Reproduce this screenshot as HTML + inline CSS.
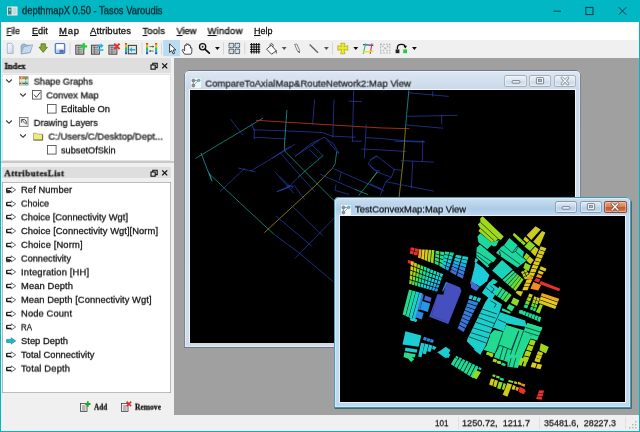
<!DOCTYPE html>
<html><head><meta charset="utf-8"><title>depthmapX</title><style>
html,body{margin:0;padding:0}
body{width:640px;height:432px;overflow:hidden;position:relative;background:#00b7c3;font-family:"Liberation Sans",sans-serif}
.a{position:absolute}
.t{position:absolute;white-space:nowrap;filter:blur(0.3px);-webkit-text-stroke:0.28px currentColor}
svg{position:absolute;overflow:visible}
u{text-decoration:underline;text-underline-offset:1px}
</style></head><body>
<div class="a" style="left:1px;top:22px;width:638px;height:18px;background:#ffffff;"></div>
<div class="a" style="left:1px;top:40px;width:638px;height:17.5px;background:#f0f0f0;"></div>
<div class="a" style="left:1px;top:57px;width:173px;height:358px;background:#f0f0f0;"></div>
<div class="a" style="left:174px;top:57.5px;width:465px;height:357.5px;background:#a0a0a0;"></div>
<div class="a" style="left:1px;top:415px;width:638px;height:16px;background:#f0f0f0;"></div>
<svg style="left:7px;top:6px" width="11" height="10" viewBox="0 0 11 10"><rect x="0" y="0.5" width="10.5" height="9" fill="#e8eef0"/><rect x="1" y="1.5" width="3.5" height="7" fill="#3f7f86"/><rect x="5.5" y="1.5" width="4" height="7" fill="#c9d6da"/><rect x="2" y="3" width="1.5" height="2" fill="#7fd0a0"/></svg>
<svg style="left:540px;top:0" width="100" height="22" viewBox="0 0 100 22"><g stroke="#063a40" stroke-width="1" fill="none"><path d="M13.5 11.2h7.5"/><rect x="45.8" y="7.4" width="7.2" height="7.2"/><path d="M78.8 7.3l7.4 7.4M86.2 7.3l-7.4 7.4"/></g></svg>
<div class="a" style="left:458px;top:417px;width:1px;height:12px;background:#e0e0e0;"></div>
<div class="a" style="left:538.5px;top:417px;width:1.0px;height:12px;background:#e0e0e0;"></div>
<div class="a" style="left:625px;top:417px;width:1px;height:12px;background:#e0e0e0;"></div>
<svg style="left:628px;top:420px" width="10" height="10"><g fill="#b8b8b8"><rect x="7" y="1" width="1.5" height="1.5"/><rect x="4" y="4" width="1.5" height="1.5"/><rect x="7" y="4" width="1.5" height="1.5"/><rect x="1" y="7" width="1.5" height="1.5"/><rect x="4" y="7" width="1.5" height="1.5"/><rect x="7" y="7" width="1.5" height="1.5"/></g></svg>
<div class="a" style="left:2px;top:58px;width:168.8px;height:14.599999999999994px;background:#dedede;"></div>
<div class="a" style="left:2px;top:74px;width:169px;height:87px;background:#ffffff;box-shadow:0 0 0 1px #e3e3e3 inset"></div>
<div class="a" style="left:1px;top:161px;width:173px;height:1.5px;background:#c8c8c8;"></div>
<div class="a" style="left:2px;top:167.2px;width:168.8px;height:11.300000000000011px;background:#dedede;"></div>
<div class="a" style="left:2px;top:181.8px;width:168.5px;height:211.7px;background:#ffffff;box-shadow:0 0 0 0.8px #a3a8ae inset"></div>
<svg style="left:148px;top:60.5px" width="24" height="10" viewBox="0 0 24 10"><g stroke="#111" fill="none" stroke-width="1.1"><rect x="3" y="4" width="4.2" height="4.2" fill="#dedede"/><path d="M4.8 4V2.2h4.4v4.4H7.4"/><path d="M14.2 2.4l5 5M19.2 2.4l-5 5" stroke-width="1.3"/></g></svg>
<svg style="left:148px;top:168px" width="24" height="10" viewBox="0 0 24 10"><g stroke="#111" fill="none" stroke-width="1.1"><rect x="3" y="4" width="4.2" height="4.2" fill="#dedede"/><path d="M4.8 4V2.2h4.4v4.4H7.4"/><path d="M14.2 2.4l5 5M19.2 2.4l-5 5" stroke-width="1.3"/></g></svg>
<svg style="left:4.6px;top:77.8px" width="8" height="6" viewBox="0 0 8 6"><path d="M1.2 1.5L4 4.3 6.800 1.5" stroke="#333" stroke-width="1.100" fill="none"/></svg>
<svg style="left:18.8px;top:91.6px" width="8" height="6" viewBox="0 0 8 6"><path d="M1.2 1.5L4 4.3 6.800 1.5" stroke="#333" stroke-width="1.100" fill="none"/></svg>
<svg style="left:4.6px;top:119.1px" width="8" height="6" viewBox="0 0 8 6"><path d="M1.2 1.5L4 4.3 6.800 1.5" stroke="#333" stroke-width="1.100" fill="none"/></svg>
<svg style="left:18.8px;top:132.8px" width="8" height="6" viewBox="0 0 8 6"><path d="M1.2 1.5L4 4.3 6.800 1.5" stroke="#333" stroke-width="1.100" fill="none"/></svg>
<svg style="left:32.2px;top:90.39999999999999px" width="9.600" height="9.600" viewBox="0 0 9.600 9.600"><rect x="0.500" y="0.500" width="8.600" height="8.600" fill="#fff" stroke="#555" stroke-width="0.9"/><path d="M2 4.700l2.300 2.600 4-5" stroke="#3a3a3a" stroke-width="1" fill="none"/></svg>
<svg style="left:46.8px;top:104.1px" width="9.600" height="9.600" viewBox="0 0 9.600 9.600"><rect x="0.500" y="0.500" width="8.600" height="8.600" fill="#fff" stroke="#555" stroke-width="0.9"/></svg>
<svg style="left:46.8px;top:145.4px" width="9.600" height="9.600" viewBox="0 0 9.600 9.600"><rect x="0.500" y="0.500" width="8.600" height="8.600" fill="#fff" stroke="#555" stroke-width="0.9"/></svg>
<svg style="left:18.700px;top:76.3px" width="9.400" height="9.400" viewBox="0 0 9.400 9.400"><rect x="0.300" y="0.300" width="8.800" height="8.800" fill="#dcdcdc" stroke="#8a8a8a" stroke-width="0.6"/><path d="M0.600 2h8.200" stroke="#e02828" stroke-width="1.300"/><path d="M0.600 7.400h8.200" stroke="#2858d0" stroke-width="1.300"/><path d="M2.800 0.800v7.800" stroke="#e8d820" stroke-width="1.200"/><path d="M6.600 0.800v7.800" stroke="#30c030" stroke-width="1.200"/><path d="M0.600 4.700h8.200" stroke="#f4f4f4" stroke-width="0.7"/></svg>
<svg style="left:18.700px;top:117.3px" width="9.400" height="9.800" viewBox="0 0 9.400 9.800"><rect x="0.400" y="0.400" width="8.600" height="9" fill="#f2f2f2" stroke="#6a6a6a" stroke-width="0.8"/><path d="M2.400 2.600h3.200l1.600 1.600v3" stroke="#333" stroke-width="0.9" fill="none"/><path d="M2.600 2.800l3.600 3.800M2.400 2.600v3.200" stroke="#444" stroke-width="0.8" fill="none"/></svg>
<svg style="left:33px;top:131.9px" width="10" height="8.600" viewBox="0 0 10 8.600"><path d="M0.500 1.200h3l0.800 1h5.200v5.800h-9z" fill="#ecec80" stroke="#8a8a48" stroke-width="0.6"/><path d="M0.600 8.100h9.100v-5.600" stroke="#55553a" stroke-width="0.8" fill="none"/></svg>
<svg style="left:5.600px;top:185.9px" width="10.400" height="8" viewBox="0 0 10.400 8"><path d="M0.600 2.400h4.600V0.800L9.700 3.900 5.200 7V5.400H0.600z" fill="#ffffff" stroke="#333" stroke-width="0.7" stroke-linejoin="round"/><path d="M0.600 5.500h4.600M0.700 2.400v3.100" stroke="#111" stroke-width="1.300" fill="none"/><path d="M0.600 2.400h4.600" stroke="#222" stroke-width="0.9" fill="none"/><rect x="0.3" y="4" width="3.6" height="3.2" fill="#333"/></svg>
<svg style="left:5.600px;top:199.65px" width="10.400" height="8" viewBox="0 0 10.400 8"><path d="M0.600 2.400h4.600V0.800L9.700 3.900 5.200 7V5.400H0.600z" fill="#ffffff" stroke="#333" stroke-width="0.7" stroke-linejoin="round"/><path d="M0.600 5.500h4.600M0.700 2.400v3.100" stroke="#111" stroke-width="1.300" fill="none"/><path d="M0.600 2.400h4.600" stroke="#222" stroke-width="0.9" fill="none"/></svg>
<svg style="left:5.600px;top:213.4px" width="10.400" height="8" viewBox="0 0 10.400 8"><path d="M0.600 2.400h4.600V0.800L9.700 3.900 5.200 7V5.400H0.600z" fill="#ffffff" stroke="#333" stroke-width="0.7" stroke-linejoin="round"/><path d="M0.600 5.500h4.600M0.700 2.400v3.100" stroke="#111" stroke-width="1.300" fill="none"/><path d="M0.600 2.400h4.600" stroke="#222" stroke-width="0.9" fill="none"/></svg>
<svg style="left:5.600px;top:227.15px" width="10.400" height="8" viewBox="0 0 10.400 8"><path d="M0.600 2.400h4.600V0.800L9.700 3.900 5.200 7V5.400H0.600z" fill="#ffffff" stroke="#333" stroke-width="0.7" stroke-linejoin="round"/><path d="M0.600 5.500h4.600M0.700 2.400v3.100" stroke="#111" stroke-width="1.300" fill="none"/><path d="M0.600 2.400h4.600" stroke="#222" stroke-width="0.9" fill="none"/></svg>
<svg style="left:5.600px;top:240.9px" width="10.400" height="8" viewBox="0 0 10.400 8"><path d="M0.600 2.400h4.600V0.800L9.700 3.900 5.200 7V5.400H0.600z" fill="#ffffff" stroke="#333" stroke-width="0.7" stroke-linejoin="round"/><path d="M0.600 5.500h4.600M0.700 2.400v3.100" stroke="#111" stroke-width="1.300" fill="none"/><path d="M0.600 2.400h4.600" stroke="#222" stroke-width="0.9" fill="none"/></svg>
<svg style="left:5.600px;top:254.65px" width="10.400" height="8" viewBox="0 0 10.400 8"><path d="M0.600 2.400h4.600V0.800L9.700 3.900 5.200 7V5.400H0.600z" fill="#ffffff" stroke="#333" stroke-width="0.7" stroke-linejoin="round"/><path d="M0.600 5.500h4.600M0.700 2.400v3.100" stroke="#111" stroke-width="1.300" fill="none"/><path d="M0.600 2.400h4.600" stroke="#222" stroke-width="0.9" fill="none"/><rect x="0.3" y="4" width="3.6" height="3.2" fill="#333"/></svg>
<svg style="left:5.600px;top:268.4px" width="10.400" height="8" viewBox="0 0 10.400 8"><path d="M0.600 2.400h4.600V0.800L9.700 3.900 5.200 7V5.400H0.600z" fill="#ffffff" stroke="#333" stroke-width="0.7" stroke-linejoin="round"/><path d="M0.600 5.500h4.600M0.700 2.400v3.100" stroke="#111" stroke-width="1.300" fill="none"/><path d="M0.600 2.400h4.600" stroke="#222" stroke-width="0.9" fill="none"/></svg>
<svg style="left:5.600px;top:282.15px" width="10.400" height="8" viewBox="0 0 10.400 8"><path d="M0.600 2.400h4.600V0.800L9.700 3.900 5.200 7V5.400H0.600z" fill="#ffffff" stroke="#333" stroke-width="0.7" stroke-linejoin="round"/><path d="M0.600 5.500h4.600M0.700 2.400v3.100" stroke="#111" stroke-width="1.300" fill="none"/><path d="M0.600 2.400h4.600" stroke="#222" stroke-width="0.9" fill="none"/></svg>
<svg style="left:5.600px;top:295.9px" width="10.400" height="8" viewBox="0 0 10.400 8"><path d="M0.600 2.400h4.600V0.800L9.700 3.900 5.200 7V5.400H0.600z" fill="#ffffff" stroke="#333" stroke-width="0.7" stroke-linejoin="round"/><path d="M0.600 5.500h4.600M0.700 2.400v3.100" stroke="#111" stroke-width="1.300" fill="none"/><path d="M0.600 2.400h4.600" stroke="#222" stroke-width="0.9" fill="none"/></svg>
<svg style="left:5.600px;top:309.65px" width="10.400" height="8" viewBox="0 0 10.400 8"><path d="M0.600 2.400h4.600V0.800L9.700 3.900 5.200 7V5.400H0.600z" fill="#ffffff" stroke="#333" stroke-width="0.7" stroke-linejoin="round"/><path d="M0.600 5.500h4.600M0.700 2.400v3.100" stroke="#111" stroke-width="1.300" fill="none"/><path d="M0.600 2.400h4.600" stroke="#222" stroke-width="0.9" fill="none"/></svg>
<svg style="left:5.600px;top:323.4px" width="10.400" height="8" viewBox="0 0 10.400 8"><path d="M0.600 2.400h4.600V0.800L9.700 3.900 5.200 7V5.400H0.600z" fill="#ffffff" stroke="#333" stroke-width="0.7" stroke-linejoin="round"/><path d="M0.600 5.500h4.600M0.700 2.400v3.100" stroke="#111" stroke-width="1.300" fill="none"/><path d="M0.600 2.400h4.600" stroke="#222" stroke-width="0.9" fill="none"/></svg>
<svg style="left:5.600px;top:337.15px" width="10.400" height="8" viewBox="0 0 10.400 8"><path d="M0.600 2.400h4.600V0.800L9.700 3.900 5.200 7V5.400H0.600z" fill="#22b8c8" stroke="#1a8a98" stroke-width="0.7" stroke-linejoin="round"/></svg>
<svg style="left:5.600px;top:350.9px" width="10.400" height="8" viewBox="0 0 10.400 8"><path d="M0.600 2.400h4.600V0.800L9.700 3.900 5.200 7V5.400H0.600z" fill="#ffffff" stroke="#333" stroke-width="0.7" stroke-linejoin="round"/><path d="M0.600 5.500h4.600M0.700 2.400v3.100" stroke="#111" stroke-width="1.300" fill="none"/><path d="M0.600 2.400h4.600" stroke="#222" stroke-width="0.9" fill="none"/></svg>
<svg style="left:5.600px;top:364.65px" width="10.400" height="8" viewBox="0 0 10.400 8"><path d="M0.600 2.400h4.600V0.800L9.700 3.900 5.200 7V5.400H0.600z" fill="#ffffff" stroke="#333" stroke-width="0.7" stroke-linejoin="round"/><path d="M0.600 5.500h4.600M0.700 2.400v3.100" stroke="#111" stroke-width="1.300" fill="none"/><path d="M0.600 2.400h4.600" stroke="#222" stroke-width="0.9" fill="none"/></svg>
<svg style="left:80px;top:401.2px" width="11" height="11" viewBox="0 0 11 11"><rect x="0.5" y="2.5" width="6.5" height="8" fill="#eee" stroke="#444" stroke-width="0.8"/><path d="M2 5h3.5M2 7h3.5M2 9h3.5" stroke="#555" stroke-width="0.7"/><path d="M7.8 0.3v5.4M5.1 3h5.4" stroke="#1aa82a" stroke-width="1.8"/></svg>
<svg style="left:121px;top:401.2px" width="11" height="11" viewBox="0 0 11 11"><rect x="0.5" y="2.5" width="6.5" height="8" fill="#eee" stroke="#444" stroke-width="0.8"/><path d="M2 5h3.5M2 7h3.5M2 9h3.5" stroke="#555" stroke-width="0.7"/><path d="M5.6 0.6l4.6 4.6M10.2 0.6L5.6 5.2" stroke="#e02a2a" stroke-width="1.6"/></svg>
<svg style="left:0;top:0" width="640" height="60" viewBox="0 0 640 60"><g filter="url(#tbb)"><defs><linearGradient id="rb" x1="0" y1="0" x2="0" y2="1"><stop offset="0" stop-color="#e02020"/><stop offset=".25" stop-color="#e8d020"/><stop offset=".5" stop-color="#30c040"/><stop offset=".75" stop-color="#20b0d8"/><stop offset="1" stop-color="#2030c0"/></linearGradient><linearGradient id="pg" x1="0" y1="0" x2="1" y2="1"><stop offset="0" stop-color="#ffffff"/><stop offset="1" stop-color="#c4d6ea"/></linearGradient></defs><path d="M70 42.5v12" stroke="#cfcfcf" stroke-width="0.8"/><path d="M142 42.5v12" stroke="#cfcfcf" stroke-width="0.8"/><path d="M161.5 42.5v12" stroke="#cfcfcf" stroke-width="0.8"/><path d="M223.5 42.5v12" stroke="#cfcfcf" stroke-width="0.8"/><path d="M244.8 42.5v12" stroke="#cfcfcf" stroke-width="0.8"/><path d="M332.5 42.5v12" stroke="#cfcfcf" stroke-width="0.8"/><path d="M7.3 43.3h4l1.8 1.8v8.3h-5.8z" fill="url(#pg)" stroke="#8ea2ba" stroke-width="0.7"/><path d="M21 46.2l1-2 3.2-.2.8 1.2h5.6l-1.4 7.4-9 1.4z" fill="#9fb9d6" stroke="#6f8cab" stroke-width="0.6"/><path d="M21.2 53.8l2.4-6.8 9.2-2.2-2.6 7.6z" fill="#c7d9ec" stroke="#7f9dbd" stroke-width="0.6"/><path d="M41 43.8h4.4v3.4h2l-4.2 5.2-4.2-5.2h2z" fill="#84a830" stroke="#5a7418" stroke-width="0.8" stroke-linejoin="round"/><rect x="55.300" y="43.500" width="9.400" height="9.800" rx="1" fill="#dfe8f4" stroke="#4a78c2" stroke-width="1.200"/><rect x="56.800" y="44.300" width="6.400" height="4" fill="#ffffff"/><rect x="59.400" y="49.800" width="4.400" height="3" fill="#4f6fa8"/><rect x="56.400" y="49.800" width="2.600" height="3" fill="#b4c6e0"/><rect x="75.8" y="45.2" width="8" height="9" fill="#c4c4c4" stroke="#3a3a3a" stroke-width="0.9"/><path d="M77.0 47.6h5.4M77.0 49.8h5.4M77.0 52h5.4M78.8 45.4v8.6" stroke="#555" stroke-width="0.6"/><path d="M83.8 43v6.6M80.5 46.3h6.6" stroke="#1fd040" stroke-width="2.2"/><rect x="91.4" y="45.2" width="8" height="9" fill="#c4c4c4" stroke="#3a3a3a" stroke-width="0.9"/><path d="M92.60000000000001 47.6h5.4M92.60000000000001 49.8h5.4M92.60000000000001 52h5.4M94.4 45.4v8.6" stroke="#555" stroke-width="0.6"/><path d="M97.2 44.8h3.4v-1.6l3 2.6-3 2.6v-1.6h-3.4z" fill="#22b2dc"/><path d="M103.4 49.2h-3.2v-1.3l-2.6 2.1 2.6 2.1v-1.3h3.2z" fill="#22b2dc"/><rect x="108.9" y="45.2" width="8" height="9" fill="#c4c4c4" stroke="#3a3a3a" stroke-width="0.9"/><path d="M110.10000000000001 47.6h5.4M110.10000000000001 49.8h5.4M110.10000000000001 52h5.4M111.9 45.4v8.6" stroke="#555" stroke-width="0.6"/><path d="M114.2 43.6l5.4 5.4M119.6 43.6l-5.4 5.4" stroke="#e43030" stroke-width="1.9"/><rect x="125" y="43" width="2" height="11.2" fill="url(#rb)"/><rect x="128.3" y="45.4" width="8.2" height="8.4" fill="#dfe6ec" stroke="#444" stroke-width="1.1"/><path d="M135.4 49h-3.4v-1.7l-3 2.4 3 2.4v-1.7h3.4z" fill="#22b2dc"/><rect x="146" y="43" width="2.1" height="11.2" fill="url(#rb)"/><rect x="155.1" y="43" width="2.1" height="11.2" fill="url(#rb)"/><path d="M149.4 46.6h4.4M149.4 51h4.4" stroke="#666" stroke-width="0.9"/><path d="M152.6 45.3l1.6 1.3-1.6 1.3zM150.6 49.7l-1.6 1.3 1.6 1.3z" fill="#555"/><rect x="163.2" y="40" width="16.8" height="16.2" fill="#b9dcf2"/><path d="M169.6 43.8v8.6l2-1.8 1.5 3.3 1.5-.7-1.5-3.2h2.7z" fill="#fff" stroke="#111" stroke-width="0.8" stroke-linejoin="round"/><path d="M184.6 54.2l-2.2-3.4c-.6-1 .5-1.8 1.3-1l.9 1v-5c0-1 1.4-1 1.5 0v-1.400c0-1 1.500-1 1.500 0v.5c0-1 1.500-1 1.500 0v1c.1-.9 1.400-.9 1.400.1v2.200c.1-.8 1.300-.8 1.300.2v3.300c0 1.300-.5 1.800-.9 2.500z" fill="#fff" stroke="#111" stroke-width="0.75" stroke-linejoin="round"/><circle cx="202.6" cy="46.8" r="3.1" fill="#eef3f8" stroke="#111" stroke-width="1.3"/><circle cx="202.6" cy="46.8" r="1" fill="#222"/><path d="M204.9 49.2l4.4 4" stroke="#111" stroke-width="1.7" stroke-linecap="round"/><path d="M215.0 47h4.800l-2.400 3z" fill="#111"/><rect x="229" y="43.3" width="4.600" height="4.400" fill="#c9e2f2" stroke="#333" stroke-width="0.9" stroke-dasharray="1.6 0.6"/><rect x="235" y="43.3" width="4.600" height="4.400" fill="#c9e2f2" stroke="#333" stroke-width="0.9" stroke-dasharray="1.6 0.6"/><rect x="229" y="49.2" width="4.600" height="4.400" fill="#c9e2f2" stroke="#333" stroke-width="0.9" stroke-dasharray="1.6 0.6"/><rect x="235" y="49.2" width="4.600" height="4.400" fill="#c9e2f2" stroke="#333" stroke-width="0.9" stroke-dasharray="1.6 0.6"/><path d="M250 44.6h10.200M250 47h10.200M250 49.400h10.200M250 51.800h10.200M251.600 43v10.600M254 43v10.600M256.400 43v10.600M258.800 43v10.600" stroke="#111" stroke-width="1"/><path d="M266.600 49.200l4.600-4 5 5.600-4.600 3.400z" fill="#fff" stroke="#333" stroke-width="0.9" stroke-linejoin="round"/><path d="M270.200 46.200c-.8-3.800 3.400-3.600 3 .4" fill="none" stroke="#333" stroke-width="0.8"/><path d="M275.800 49.800c1.400 1.200 1.200 3 .6 4.200-.8-1.200-1.200-2.600-.6-4.200z" fill="#555"/><path d="M281.8 47h4.800l-2.400 3z" fill="#555"/><path d="M294.600 44.400l2.200-.4 2.800 6.400-.2 2.200-1.800-1.200z" fill="#f4f4f4" stroke="#666" stroke-width="0.8" stroke-linejoin="round"/><path d="M298.200 51.200l1.200 1.400" stroke="#333" stroke-width="0.8"/><path d="M309.600 44.400l8.400 8.400" stroke="#666" stroke-width="1.400"/><path d="M324.0 47h4.800l-2.400 3z" fill="#555"/><path d="M340.600 43.200h4.400l-1 3.400 3.800-1v4.800l-3.800-1 1 4.400h-4.400l1-4.400-3.800 1v-4.800l3.800 1z" fill="#ecec24" stroke="#a8a820" stroke-width="0.7" stroke-linejoin="round"/><path d="M353.40000000000003 47h4.800l-2.400 3z" fill="#111"/><path d="M363 44.600l10.400.8" stroke="#2848d0" stroke-width="1.1"/><path d="M365.800 43.400l-2.600 10.400" stroke="#30c840" stroke-width="1.1"/><path d="M372 43.400l-1.800 10.400" stroke="#e03020" stroke-width="1.1"/><path d="M363 52.200l10.400-1" stroke="#e8e020" stroke-width="1.200"/><g stroke="#b4b4b4" stroke-width="1.100" stroke-dasharray="2 1"><path d="M380 44.200h10.400M380 53h10.400M380.600 43.400v10.400M389.800 43.400v10.400"/><path d="M382 45.600l6.400 6.200M388.400 45.600l-6.400 6.200"/></g><rect x="395.600" y="49.400" width="3.800" height="3.800" fill="#222"/><rect x="403.200" y="49.400" width="3.800" height="3.800" fill="#20d040"/><path d="M397.400 49v-1.400c0-4 7.600-4.200 7.800-.4" fill="none" stroke="#111" stroke-width="1.300"/><path d="M403.600 46l1.800 2.600 1.600-2.800z" fill="#111"/><path d="M412.0 47h4.800l-2.400 3z" fill="#111"/></g><defs><filter id="tbb"><feGaussianBlur stdDeviation="0.3"/></filter></defs></svg>
<div class="a" style="left:184.3px;top:70.4px;width:396.59999999999997px;height:277.79999999999995px;background:linear-gradient(180deg,#e0e9f4 0px,#d3e0ee 9px,#ccd9e9 19px,#d0dcea 100%);border-radius:5px 5px 0.5px 0.5px;box-shadow:0 0 0 0.9px #6f7a86 inset, 0 0 0 1.7px rgba(255,255,255,.55) inset"></div>
<div class="a" style="left:189.3px;top:88.89999999999999px;width:386.29999999999995px;height:254.40000000000003px;background:#f2f6fb"></div>
<div class="a" style="left:190.0px;top:89.6px;width:384.9px;height:253.00000000000003px;background:#000;overflow:hidden"><svg style="left:0;top:0" width="385" height="253" viewBox="0 0 385 253"><g opacity="0.95" filter="url(#axb)"><path d="M5.5 68.4 L73.2 28.0" stroke="#18a890" stroke-width="0.75" fill="none"/><path d="M40.6 29.1 L52.8 45.3" stroke="#2a40b0" stroke-width="0.75" fill="none"/><path d="M66.1 30.3 L100.0 32.4 L190.0 37.9 L219.4 38.7" stroke="#c03418" stroke-width="0.9" fill="none"/><path d="M61.1 33.2 L64.6 41.0" stroke="#2a40b0" stroke-width="0.75" fill="none"/><path d="M63.8 39.8 L100.0 41.0 L132.5 42.6 L142.0 46.1 L165.6 47.3" stroke="#2a40b0" stroke-width="0.75" fill="none"/><path d="M63.8 47.3 L96.0 48.9" stroke="#2a40b0" stroke-width="0.75" fill="none"/><path d="M64.2 39.0 L64.2 49.2" stroke="#2a40b0" stroke-width="0.75" fill="none"/><path d="M96.9 20.1 L94.5 53.9 L94.7 61.0" stroke="#20b0b8" stroke-width="0.75" fill="none"/><path d="M81.9 68.4 L100.0 56.3" stroke="#2a40b0" stroke-width="0.75" fill="none"/><path d="M11.0 63.0 L21.3 89.8" stroke="#20b0b8" stroke-width="0.75" fill="none"/><path d="M19.3 82.9 L22.0 91.4" stroke="#20b0b8" stroke-width="0.75" fill="none"/><path d="M19.7 84.3 L55.9 118.4 L83.9 144.2" stroke="#18a890" stroke-width="0.75" fill="none"/><path d="M83.9 144.2 L109.8 163.4 L143.5 191.9" stroke="#2a40b0" stroke-width="0.75" fill="none"/><path d="M29.9 101.6 L55.1 78.0" stroke="#2a40b0" stroke-width="0.75" fill="none"/><path d="M48.0 78.0 L65.4 81.9" stroke="#2a40b0" stroke-width="0.75" fill="none"/><path d="M60.6 81.1 L100.0 57.5 L105.0 53.9" stroke="#2a40b0" stroke-width="0.75" fill="none"/><path d="M89.8 62.2 L100.0 74.0 L124.6 101.6" stroke="#2a40b0" stroke-width="0.75" fill="none"/><path d="M85.0 81.9 L100.0 99.2 L104.0 103.4" stroke="#2a40b0" stroke-width="0.75" fill="none"/><path d="M86.6 101.6 L100.0 96.1" stroke="#2a40b0" stroke-width="0.75" fill="none"/><path d="M124.6 9.5 L122.6 34.7" stroke="#2a40b0" stroke-width="0.75" fill="none"/><path d="M144.0 9.5 L142.8 47.6" stroke="#2a40b0" stroke-width="0.75" fill="none"/><path d="M163.7 0.4 L162.4 51.6" stroke="#2a40b0" stroke-width="0.75" fill="none"/><path d="M158.5 11.1 L171.9 11.7" stroke="#2a40b0" stroke-width="0.75" fill="none"/><path d="M176.3 34.3 L174.3 68.4" stroke="#2a40b0" stroke-width="0.75" fill="none"/><path d="M161.7 51.1 L171.9 51.1" stroke="#2a40b0" stroke-width="0.75" fill="none"/><path d="M175.0 47.6 L190.0 48.4 L215.4 50.8 L234.3 51.6" stroke="#2a40b0" stroke-width="0.75" fill="none"/><path d="M171.1 59.0 L190.0 59.9 L216.2 61.5" stroke="#2a40b0" stroke-width="0.75" fill="none"/><path d="M120.7 53.9 L134.1 47.3 L143.5 53.9 L149.0 63.4 L146.7 61.4" stroke="#2a40b0" stroke-width="0.75" fill="none"/><path d="M105.0 66.5 L120.7 53.9" stroke="#2a40b0" stroke-width="0.75" fill="none"/><path d="M119.1 59.4 L128.6 68.4" stroke="#2a40b0" stroke-width="0.75" fill="none"/><path d="M121.5 54.7 L133.3 65.8" stroke="#2a40b0" stroke-width="0.75" fill="none"/><path d="M94.7 61.0 L143.5 110.2 L145.0 111.4" stroke="#18a890" stroke-width="0.75" fill="none"/><path d="M133.3 65.4 L116.8 79.5 L108.0 87.4" stroke="#18a890" stroke-width="0.75" fill="none"/><path d="M108.0 87.4 L99.4 96.1 L90.0 100.9" stroke="#2a40b0" stroke-width="0.75" fill="none"/><path d="M142.0 78.7 L125.6 95.4 L74.4 142.6" stroke="#b0a820" stroke-width="0.75" fill="none"/><path d="M146.7 61.4 L145.1 74.0 L142.0 78.7" stroke="#18a890" stroke-width="0.75" fill="none"/><path d="M137.2 50.4 L146.7 61.4" stroke="#2a40b0" stroke-width="0.75" fill="none"/><path d="M105.0 66.1 L129.4 50.4" stroke="#2a40b0" stroke-width="0.75" fill="none"/><path d="M143.5 78.7 L190.0 99.2 L194.0 100.9" stroke="#2a40b0" stroke-width="0.75" fill="none"/><path d="M130.2 84.3 L165.0 99.4" stroke="#2a40b0" stroke-width="0.75" fill="none"/><path d="M165.0 99.4 L178.2 104.7" stroke="#18a890" stroke-width="0.75" fill="none"/><path d="M151.4 81.9 L149.0 90.6" stroke="#2a40b0" stroke-width="0.75" fill="none"/><path d="M146.0 94.4 L145.0 100.4 L159.0 104.4" stroke="#2a40b0" stroke-width="0.75" fill="none"/><path d="M187.6 81.9 L168.7 105.5" stroke="#18a890" stroke-width="0.75" fill="none"/><path d="M187.6 66.1 L181.3 69.3 L178.2 74.0 L184.5 80.4 L190.0 81.1" stroke="#2a40b0" stroke-width="0.75" fill="none"/><path d="M90.0 86.6 L99.4 96.1" stroke="#2a40b0" stroke-width="0.75" fill="none"/><path d="M97.0 95.4 L103.4 96.1 L101.0 99.4" stroke="#2a40b0" stroke-width="0.75" fill="none"/><path d="M86.2 126.1 L121.7 156.0" stroke="#2a40b0" stroke-width="0.75" fill="none"/><path d="M101.2 115.1 L132.7 145.8" stroke="#2a40b0" stroke-width="0.75" fill="none"/><path d="M144.5 127.7 L104.8 168.6" stroke="#2a40b0" stroke-width="0.75" fill="none"/><path d="M104.3 95.4 L114.6 109.6" stroke="#2a40b0" stroke-width="0.75" fill="none"/><path d="M87.0 101.7 L102.0 96.2" stroke="#2a40b0" stroke-width="0.75" fill="none"/><path d="M218.9 0.4 L217.0 20.4" stroke="#20b0b8" stroke-width="0.75" fill="none"/><path d="M217.0 20.4 L215.4 39.0" stroke="#18a890" stroke-width="0.75" fill="none"/><path d="M215.4 39.0 L213.4 68.4 L209.1 107.1" stroke="#b0a820" stroke-width="0.75" fill="none"/><path d="M218.6 2.8 L258.7 6.4" stroke="#2a40b0" stroke-width="0.75" fill="none"/><path d="M242.7 1.2 L242.7 6.7" stroke="#2a40b0" stroke-width="0.75" fill="none"/><path d="M215.9 26.4 L267.4 25.3" stroke="#2a40b0" stroke-width="0.75" fill="none"/><path d="M251.7 24.8 L251.7 34.3" stroke="#2a40b0" stroke-width="0.75" fill="none"/><path d="M215.9 35.0 L253.2 38.2" stroke="#2a40b0" stroke-width="0.75" fill="none"/><path d="M232.8 50.0 L232.3 71.7" stroke="#2a40b0" stroke-width="0.75" fill="none"/><path d="M204.4 51.2 L235.1 52.0" stroke="#2a40b0" stroke-width="0.75" fill="none"/><path d="M210.7 70.6 L243.8 72.1" stroke="#2a40b0" stroke-width="0.75" fill="none"/><path d="M222.8 70.9 L221.3 98.4" stroke="#2a40b0" stroke-width="0.75" fill="none"/><path d="M195.7 91.7 L243.8 101.1" stroke="#2a40b0" stroke-width="0.75" fill="none"/><path d="M180.0 70.1 L186.3 65.8 L204.4 79.5 L201.3 87.4 L187.1 81.9 L180.0 74.8" stroke="#2a40b0" stroke-width="0.75" fill="none"/><path d="M187.1 81.9 L180.0 91.4" stroke="#20b060" stroke-width="0.75" fill="none"/><path d="M201.3 87.4 L195.7 91.7 L190.2 105.5" stroke="#2a40b0" stroke-width="0.75" fill="none"/><path d="M180.0 93.7 L191.8 99.2" stroke="#2a40b0" stroke-width="0.75" fill="none"/><path d="M203.6 79.5 L211.5 80.4" stroke="#2a40b0" stroke-width="0.75" fill="none"/></g><defs><filter id="axb" x="-2%" y="-2%" width="104%" height="104%"><feGaussianBlur stdDeviation="0.3"/></filter></defs></svg></div>
<svg style="left:191.2px;top:78.4px" width="10" height="10" viewBox="0 0 10 10"><rect x="0" y="0" width="10" height="10" rx="1" fill="#f6f8fa" opacity=".92"/><path d="M2.300 2.400h5.400M2.300 2.400v5.200M2.500 7.400l5-5" stroke="#7a8894" stroke-width="0.8" fill="none"/><circle cx="2.400" cy="2.400" r="1.500" fill="#8a9298" stroke="#5a646c" stroke-width="0.5"/><circle cx="7.800" cy="2.300" r="1.300" fill="#58c0d8" stroke="#4a8a9a" stroke-width="0.5"/><circle cx="2.400" cy="7.600" r="1.500" fill="#8a9298" stroke="#5a646c" stroke-width="0.5"/></svg>
<div class="a" style="left:553.8px;top:74.7px;width:22.3px;height:12.3px;background:linear-gradient(180deg,rgba(255,255,255,.55) 0,rgba(255,255,255,.25) 45%,rgba(200,215,232,.35) 55%,rgba(255,255,255,.3) 100%);border-radius:2.5px;box-shadow:0 0 0 0.9px #a3aebb inset,0 0 0 1.7px rgba(255,255,255,.5) inset"></div>
<svg style="left:559.95px;top:75.85000000000001px" width="10" height="10"><path d="M2 1.8l6 6.2M8 1.8l-6 6.2" stroke="#6d7882" stroke-width="2.6" stroke-linecap="round"/><path d="M2 1.8l6 6.2M8 1.8l-6 6.2" stroke="#f4f6f8" stroke-width="1.4" stroke-linecap="round"/></svg>
<div class="a" style="left:529.1px;top:74.7px;width:22.3px;height:12.3px;background:linear-gradient(180deg,rgba(255,255,255,.55) 0,rgba(255,255,255,.25) 45%,rgba(200,215,232,.35) 55%,rgba(255,255,255,.3) 100%);border-radius:2.5px;box-shadow:0 0 0 0.9px #a3aebb inset,0 0 0 1.7px rgba(255,255,255,.5) inset"></div>
<svg style="left:535.25px;top:75.85000000000001px" width="10" height="10"><rect x="1.4" y="1.6" width="7.2" height="6.2" rx="0.8" fill="#f4f6f8" stroke="#5d6873" stroke-width="0.8"/><rect x="3.4" y="3.6" width="3.2" height="2.2" fill="#a9b9c9" stroke="#5d6873" stroke-width="0.6"/></svg>
<div class="a" style="left:504.4px;top:74.7px;width:22.3px;height:12.3px;background:linear-gradient(180deg,rgba(255,255,255,.55) 0,rgba(255,255,255,.25) 45%,rgba(200,215,232,.35) 55%,rgba(255,255,255,.3) 100%);border-radius:2.5px;box-shadow:0 0 0 0.9px #a3aebb inset,0 0 0 1.7px rgba(255,255,255,.5) inset"></div>
<svg style="left:510.55000000000007px;top:75.85000000000001px" width="10" height="10"><rect x="1.2" y="4.6" width="7.6" height="2.6" rx="0.8" fill="#f4f6f8" stroke="#5d6873" stroke-width="0.8"/></svg>
<div class="a" style="left:333.9px;top:196.7px;width:297.30000000000007px;height:211.7px;background:linear-gradient(180deg,#cfe2f3 0px,#b6d2eb 8px,#accbe8 12px,#bed8ef 19px,#c0d9ef 100%);border-radius:5px 5px 0.5px 0.5px;box-shadow:0 0 0 0.9px #3a9aa6 inset, 0 0 0 1.7px rgba(255,255,255,.55) inset,0.7px 0.7px 0 0 #1d5a62"></div>
<div class="a" style="left:339.1px;top:215.20000000000002px;width:286.99999999999994px;height:187.89999999999998px;background:#e6f0fa"></div>
<div class="a" style="left:339.8px;top:215.9px;width:285.59999999999997px;height:186.49999999999997px;background:#000;overflow:hidden"><svg style="left:0;top:0" width="286" height="187" viewBox="0 0 286 187"><g filter="url(#cvb)"><polygon points="142.6,0.2 163.7,20.6 160.9,23.9 158.1,22.7 156.2,24.8 151.5,26.2 138.4,15.0 140.3,12.2 137.9,8.4 140.3,6.1 140.3,2.3" fill="#a0d81c"/><path d="M140.3 6.1 L158.1 22.7" stroke="#001018" stroke-width="0.65" fill="none"/><path d="M140.3 12.2 L154.3 24.8" stroke="#001018" stroke-width="0.65" fill="none"/><polygon points="140.3,17.3 151.5,26.2 159.0,23.9 156.2,30.0 153.4,30.4 151.5,29.0 147.3,33.3 138.4,26.2 137.4,20.6" fill="#1fd89e"/><polygon points="136.7,31.8 140.0,28.6 156.4,42.2 153.6,45.9 150.3,46.8 147.0,51.1 136.3,41.2" fill="#1fd89e"/><path d="M137.2 36.1 L152.7 46.4" stroke="#001018" stroke-width="0.65" fill="none"/><path d="M136.7 39.3 L148.9 48.7" stroke="#001018" stroke-width="0.65" fill="none"/><polygon points="135.3,42.2 138.3,43.8 136.4,46.8 134.4,45.9" fill="#1ececd"/><polygon points="135.3,45.9 143.3,52.0 149.4,59.0 147.0,65.6 141.9,68.1 131.1,68.1 131.1,64.7 134.4,51.5" fill="#1eccd8"/><polygon points="146.1,48.3 149.4,50.4 147.5,51.7" fill="#1eccd8"/><polygon points="130.4,64.8 134.4,68.1 130.2,68.1" fill="#4668d0"/><polygon points="153.1,62.8 157.8,65.6 155.0,68.1 148.9,68.1 149.4,66.5" fill="#1ed3b8"/><polygon points="169.4,21.9 177.9,29.4 176.4,31.3 178.3,30.7 184.1,36.0 182.5,41.2 186.3,44.7 177.4,51.5 155.8,37.2 157.2,35.5 161.4,30.8 163.8,29.4" fill="#1fd89e"/><path d="M163.8 29.4 L172.2 36.7 L177.9 29.4" stroke="#001018" stroke-width="0.65" fill="none"/><path d="M159.6 33.5 L180.2 48.5" stroke="#001018" stroke-width="0.65" fill="none"/><path d="M172.2 36.7 L175.5 35.5 L182.5 41.6" stroke="#001018" stroke-width="0.65" fill="none"/><path d="M175.5 35.5 L178.3 30.7" stroke="#001018" stroke-width="0.65" fill="none"/><path d="M155.8 37.2 L160.5 40.2 L159.6 35.5" stroke="#000" stroke-width="0.8" fill="none"/><polygon points="174.1,16.8 182.5,24.3 180.2,26.2 172.7,19.1" fill="#91d924"/><polygon points="189.6,24.8 195.2,29.4 190.0,35.1 184.4,30.4" fill="#8ada28"/><polygon points="195.2,30.4 198.5,33.2 195.2,40.2 190.5,35.5" fill="#cdcc1e"/><polygon points="186.3,36.9 189.6,39.8 186.3,44.0 183.5,41.2" fill="#8ada28"/><polygon points="189.6,40.2 193.8,44.0 190.5,48.2 186.3,44.4" fill="#cdcc1e"/><polygon points="195.5,10.3 200.7,13.6 191.3,23.9 186.6,19.2" fill="#cdcc1e"/><polygon points="202.1,15.0 205.4,16.4 199.3,30.4 193.2,25.8" fill="#cdcc1e"/><polygon points="185.2,20.6 189.4,24.3 187.1,26.7 183.3,23.4" fill="#cdcc1e"/><polygon points="182.4,24.3 185.7,27.2 183.8,29.5 180.5,26.2" fill="#91d924"/><polygon points="200.7,30.3 206.4,32.3 205.0,35.3 199.4,33.5" fill="#d6cb1f"/><polygon points="199.2,34.0 204.8,35.8 203.4,38.9 197.8,37.2" fill="#d7ca1f"/><polygon points="197.6,37.7 203.2,39.4 201.8,42.4 196.3,40.9" fill="#d9ca1f"/><polygon points="196.0,41.4 201.6,42.9 200.2,45.9 194.7,44.6" fill="#daca1f"/><polygon points="194.5,45.1 200.0,46.4 198.6,49.5 193.1,48.3" fill="#dcca1f"/><polygon points="192.9,48.8 198.4,50.0 197.1,53.0 191.6,52.0" fill="#deca1f"/><polygon points="191.3,52.5 196.8,53.5 195.5,56.5 190.0,55.7" fill="#dfc91f"/><polygon points="189.8,56.2 195.2,57.0 193.9,60.0 188.4,59.4" fill="#e1c91f"/><polygon points="188.2,59.9 193.6,60.5 192.3,63.6 186.9,63.1" fill="#e2c920"/><polygon points="186.7,63.6 192.1,64.1 190.7,67.1 185.3,66.8" fill="#e4c920"/><polygon points="185.1,67.3 190.5,67.6 189.1,70.6 183.7,70.5" fill="#e6c820"/><polygon points="183.5,71.0 188.9,71.1 187.5,74.2 182.2,74.2" fill="#e7c820"/><polygon points="187.4,59.6 192.5,61.3 191.0,64.3 185.7,62.7" fill="#f08c28"/><polygon points="200.9,50.2 206.6,52.7 205.1,55.5 199.4,53.3" fill="#dcca1f"/><polygon points="198.8,54.3 203.9,56.6 202.3,58.7 197.6,57.1" fill="#e4c920"/><polygon points="197.6,58.0 202.3,59.9 200.7,62.2 196.0,60.8" fill="#f08c28"/><polygon points="196.0,62.0 200.4,63.6 198.8,66.4 194.1,65.0" fill="#e83030"/><polygon points="193.4,66.0 201.1,69.0 198.3,74.6 190.4,72.7" fill="#f08c28"/><polygon points="200.8,65.0 220.3,72.7 219.1,75.3 199.3,68.0" fill="#e83030"/><polygon points="185.2,46.8 190.8,49.6 188.5,55.2 183.3,51.9" fill="#8ada28"/><polygon points="181.0,56.0 183.3,54.8 184.5,56.9 182.2,58.2" fill="#acd51d"/><polygon points="182.4,58.6 184.7,57.4 185.9,59.5 183.5,60.9" fill="#b4d31d"/><polygon points="183.7,61.3 186.1,60.0 187.3,62.2 184.9,63.6" fill="#bbd11d"/><polygon points="183.8,54.5 186.0,53.3 187.3,55.5 184.9,56.7" fill="#bdd01d"/><polygon points="185.2,57.1 187.5,55.9 188.8,58.0 186.4,59.3" fill="#c5ce1e"/><polygon points="186.6,59.7 189.0,58.4 190.3,60.5 187.8,61.9" fill="#cccc1e"/><polygon points="133.3,61.3 145.6,61.3 144.7,66.9 139.8,70.8 134.2,66.7" fill="#1eccd8"/><polygon points="130.8,64.8 134.4,66.9 139.6,71.2 136.3,75.0 131.1,71.8" fill="#4668d0"/><polygon points="129.9,78.9 133.1,79.8 131.6,83.5 128.5,82.5" fill="#1eccd8"/><polygon points="133.9,80.1 137.2,81.0 135.5,84.7 132.4,83.8" fill="#1eccd8"/><polygon points="138.0,81.2 141.2,82.2 139.4,86.0 136.3,85.0" fill="#1eccd8"/><polygon points="128.7,83.7 138.5,86.7 136.9,89.8 127.5,86.8" fill="#3483dd"/><polygon points="127.3,87.3 136.6,90.4 135.0,93.6 126.1,90.4" fill="#3680dc"/><polygon points="125.9,91.0 134.7,94.1 133.1,97.3 124.7,94.1" fill="#387eda"/><polygon points="124.5,94.6 132.8,97.9 131.2,101.0 123.3,97.7" fill="#3a7bd9"/><polygon points="123.1,98.3 130.9,101.6 129.3,104.7 121.9,101.4" fill="#3b78d8"/><polygon points="121.7,102.0 129.0,105.3 127.4,108.4 120.5,105.0" fill="#3d76d7"/><polygon points="120.3,105.6 127.1,109.0 125.5,112.1 119.1,108.7" fill="#3f73d5"/><polygon points="118.9,109.3 125.2,112.7 123.5,115.9 117.7,112.3" fill="#4170d4"/><polygon points="149.4,65.8 158.8,72.5 151.7,84.3 141.9,76.8" fill="#1ececd"/><path d="M145.6 71.4 L154.5 78.2" stroke="#001018" stroke-width="0.65" fill="none"/><path d="M150.3 69.7 L154.1 73.0 L151.3 77.2" stroke="#001018" stroke-width="0.65" fill="none"/><polygon points="159.5,70.3 162.2,72.3 156.9,80.1 154.3,78.3" fill="#23da93"/><polygon points="162.6,72.6 165.3,74.5 160.0,82.2 157.3,80.4" fill="#27dc85"/><polygon points="165.8,74.8 168.5,76.7 163.0,84.3 160.4,82.5" fill="#3ddc6a"/><polygon points="168.9,77.0 171.7,78.9 166.0,86.5 163.4,84.6" fill="#57dc4b"/><polygon points="173.3,81.4 179.4,84.3 177.0,89.9 170.9,87.1" fill="#91d924"/><polygon points="169.1,88.0 174.7,90.8 171.9,95.5 166.7,92.2" fill="#30dc79"/><polygon points="162.5,92.2 170.9,96.0 170.0,97.8 161.6,94.6" fill="#23da92"/><polygon points="179.4,94.1 183.1,95.2 183.1,98.0 178.9,96.9" fill="#23da92"/><polygon points="70.8,31.2 74.6,32.1 74.0,35.1 70.3,34.2" fill="#e83030"/><polygon points="70.2,34.6 73.9,35.5 73.3,38.5 69.7,37.6" fill="#e83030"/><polygon points="75.1,32.2 78.9,33.1 78.2,36.1 74.5,35.2" fill="#e83030"/><polygon points="74.4,35.6 78.1,36.6 77.3,39.6 73.8,38.7" fill="#e83030"/><polygon points="79.0,33.3 81.7,33.4 80.7,42.6 78.0,41.7" fill="#ee9b26"/><polygon points="82.2,33.4 84.8,33.6 83.9,43.8 81.2,42.8" fill="#e8c820"/><polygon points="85.4,33.6 88.0,33.7 87.1,45.0 84.4,44.0" fill="#d3cb1e"/><polygon points="88.6,33.8 91.2,33.9 90.2,46.2 87.6,45.2" fill="#b7d21d"/><polygon points="91.8,34.0 94.4,34.1 93.4,47.4 90.8,46.4" fill="#96d921"/><polygon points="95.7,34.7 99.4,35.3 99.2,38.4 95.4,37.5" fill="#42dc63"/><polygon points="95.4,38.1 99.2,39.0 99.0,42.1 95.2,40.8" fill="#3bdc6c"/><polygon points="95.1,41.4 98.9,42.7 98.8,45.8 94.9,44.2" fill="#33dc75"/><polygon points="94.8,44.8 98.7,46.4 98.5,49.5 94.6,47.6" fill="#2cdc7e"/><polygon points="100.2,35.4 104.0,36.1 103.9,39.4 100.1,38.6" fill="#27dc84"/><polygon points="100.0,39.2 103.8,40.2 103.7,43.6 99.8,42.3" fill="#26db88"/><polygon points="99.8,43.0 103.6,44.3 103.5,47.7 99.6,46.1" fill="#25db8c"/><polygon points="99.6,46.8 103.4,48.4 103.3,51.8 99.4,49.9" fill="#24da90"/><polygon points="105.0,35.5 109.2,36.1 108.4,39.1 104.4,38.3" fill="#1fd99d"/><polygon points="104.3,38.7 108.3,39.6 107.5,42.5 103.7,41.5" fill="#1ed5b0"/><polygon points="103.6,42.0 107.4,43.0 106.6,46.0 103.0,44.7" fill="#1ed0c4"/><polygon points="102.9,45.2 106.5,46.5 105.7,49.4 102.4,48.0" fill="#1eccd8"/><polygon points="102.3,48.4 105.5,49.9 104.8,52.9 101.7,51.2" fill="#21badd"/><polygon points="109.9,36.2 114.1,36.8 113.1,40.0 109.1,39.2" fill="#1ed6a9"/><polygon points="108.9,39.7 112.9,40.5 111.9,43.7 108.1,42.7" fill="#1ed1c3"/><polygon points="108.0,43.2 111.7,44.2 110.7,47.4 107.2,46.2" fill="#1fc8d9"/><polygon points="107.0,46.7 110.5,47.9 109.5,51.1 106.2,49.7" fill="#23b1df"/><polygon points="106.1,50.2 109.3,51.6 108.3,54.8 105.3,53.1" fill="#279ae5"/><polygon points="116.0,38.8 121.7,39.7 120.9,42.6 115.1,41.3" fill="#1ed1c0"/><polygon points="115.0,41.7 120.8,43.1 119.9,45.9 114.1,44.3" fill="#1fc8d9"/><polygon points="114.0,44.7 119.8,46.4 118.9,49.2 113.1,47.2" fill="#24aee0"/><polygon points="113.0,47.6 118.8,49.7 118.0,52.5 112.1,50.1" fill="#2995e5"/><polygon points="112.0,50.6 117.8,53.0 117.0,55.9 111.1,53.1" fill="#3582dc"/><polygon points="111.0,53.5 116.9,56.3 116.0,59.2 110.1,56.0" fill="#4170d4"/><polygon points="122.7,39.9 128.4,40.9 127.6,44.1 121.8,42.8" fill="#1ecfcb"/><polygon points="121.7,43.3 127.5,44.6 126.6,47.8 120.9,46.2" fill="#20bfdb"/><polygon points="120.7,46.6 126.5,48.4 125.7,51.6 119.9,49.5" fill="#25a6e2"/><polygon points="119.8,50.0 125.6,52.1 124.7,55.3 118.9,52.9" fill="#2c90e3"/><polygon points="118.8,53.4 124.6,55.8 123.8,59.1 117.9,56.3" fill="#387eda"/><polygon points="117.8,56.8 123.7,59.6 122.8,62.8 117.0,59.7" fill="#446cd2"/><polygon points="67.7,44.1 74.3,45.4 73.6,48.4 68.1,47.3" fill="#e83030"/><polygon points="71.1,45.2 73.7,46.3 73.4,50.1 70.7,49.1" fill="#e9be21"/><polygon points="70.7,49.9 73.3,50.9 72.9,54.7 70.4,53.8" fill="#d9ca1f"/><polygon points="70.3,54.6 72.8,55.5 72.4,59.3 70.0,58.5" fill="#c2cf1e"/><polygon points="69.9,59.3 72.4,60.1 72.0,63.9 69.6,63.2" fill="#a6d61c"/><polygon points="69.5,64.0 71.9,64.7 71.5,68.5 69.2,67.8" fill="#82da2c"/><polygon points="74.3,46.6 77.0,47.6 76.6,51.3 73.9,50.3" fill="#cccc1e"/><polygon points="73.8,51.1 76.5,52.1 76.0,55.8 73.5,54.9" fill="#b3d31d"/><polygon points="73.4,55.7 75.9,56.6 75.4,60.3 73.0,59.5" fill="#9ad81f"/><polygon points="72.9,60.3 75.3,61.1 74.9,64.8 72.5,64.1" fill="#7adb30"/><polygon points="72.4,64.9 74.8,65.6 74.3,69.3 72.0,68.7" fill="#5adc48"/><polygon points="77.6,47.9 80.3,49.0 79.7,52.6 77.1,51.5" fill="#9bd81f"/><polygon points="77.0,52.4 79.6,53.3 79.1,56.9 76.6,56.0" fill="#81da2d"/><polygon points="76.5,56.8 79.0,57.7 78.5,61.3 76.0,60.5" fill="#66dc3b"/><polygon points="75.9,61.3 78.3,62.1 77.8,65.7 75.4,65.0" fill="#4cdc58"/><polygon points="75.3,65.8 77.7,66.5 77.2,70.1 74.9,69.5" fill="#31dc77"/><polygon points="80.9,49.2 83.5,50.3 82.9,53.8 80.3,52.8" fill="#5cdc45"/><polygon points="80.2,53.6 82.8,54.6 82.2,58.1 79.7,57.2" fill="#48dc5d"/><polygon points="79.5,57.9 82.1,58.8 81.5,62.4 79.0,61.5" fill="#33dc75"/><polygon points="78.9,62.3 81.3,63.1 80.7,66.7 78.3,65.9" fill="#26db87"/><polygon points="78.2,66.7 80.6,67.4 80.0,70.9 77.7,70.3" fill="#23da92"/><polygon points="84.1,50.5 86.8,51.6 86.1,55.0 83.5,54.0" fill="#22da94"/><polygon points="83.4,54.8 86.0,55.8 85.3,59.2 82.8,58.3" fill="#1fd99d"/><polygon points="82.6,59.0 85.2,59.9 84.5,63.4 82.0,62.5" fill="#1ed6a9"/><polygon points="81.9,63.3 84.3,64.1 83.7,67.6 81.3,66.8" fill="#1ed3b7"/><polygon points="81.1,67.6 83.5,68.3 82.9,71.7 80.5,71.1" fill="#1ed0c4"/><polygon points="87.4,51.8 90.1,52.9 89.3,56.3 86.7,55.2" fill="#1fd99d"/><polygon points="86.6,56.0 89.2,57.0 88.4,60.3 85.9,59.4" fill="#1ed6aa"/><polygon points="85.7,60.1 88.2,61.1 87.5,64.4 85.0,63.6" fill="#1ed3b8"/><polygon points="84.9,64.3 87.3,65.1 86.6,68.5 84.2,67.7" fill="#1ed0c6"/><polygon points="84.0,68.5 86.4,69.2 85.7,72.5 83.4,71.9" fill="#1ecdd4"/><polygon points="90.6,53.2 93.3,54.2 92.5,57.5 89.9,56.5" fill="#1ed7a8"/><polygon points="89.7,57.2 92.3,58.2 91.5,61.4 89.0,60.5" fill="#1ed3b7"/><polygon points="88.8,61.3 91.3,62.2 90.5,65.4 88.0,64.6" fill="#1ed0c6"/><polygon points="87.9,65.3 90.3,66.1 89.5,69.4 87.1,68.6" fill="#1ecdd5"/><polygon points="87.0,69.4 89.3,70.1 88.5,73.3 86.2,72.7" fill="#20c2db"/><polygon points="93.9,54.5 96.6,55.6 95.7,58.7 93.1,57.7" fill="#1ed4b5"/><polygon points="92.9,58.4 95.5,59.4 94.6,62.6 92.1,61.6" fill="#1ed0c5"/><polygon points="91.9,62.4 94.4,63.3 93.5,66.4 91.1,65.6" fill="#1ecdd4"/><polygon points="90.9,66.3 93.3,67.1 92.5,70.3 90.1,69.5" fill="#20c1db"/><polygon points="89.9,70.2 92.3,71.0 91.4,74.1 89.0,73.5" fill="#23b3de"/><polygon points="97.2,55.8 99.8,56.9 98.9,59.9 96.3,58.9" fill="#1ed1c2"/><polygon points="96.1,59.6 98.7,60.6 97.7,63.7 95.2,62.8" fill="#1ecdd3"/><polygon points="95.0,63.5 97.5,64.4 96.5,67.4 94.1,66.6" fill="#20c2db"/><polygon points="93.9,67.3 96.3,68.1 95.4,71.2 93.0,70.4" fill="#23b3de"/><polygon points="92.8,71.1 95.2,71.8 94.2,74.9 91.9,74.3" fill="#25a5e2"/><polygon points="100.4,57.1 103.1,58.2 102.1,61.2 99.5,60.2" fill="#1ececf"/><polygon points="99.2,60.8 101.8,61.8 100.8,64.8 98.3,63.9" fill="#1fc4da"/><polygon points="98.1,64.6 100.6,65.5 99.6,68.4 97.1,67.6" fill="#22b5de"/><polygon points="96.9,68.3 99.3,69.1 98.3,72.1 95.9,71.3" fill="#25a6e2"/><polygon points="95.7,72.0 98.1,72.7 97.1,75.7 94.7,75.1" fill="#2896e6"/><polygon points="69.0,73.5 72.1,74.4 65.4,99.8 62.6,98.4" fill="#26db87"/><polygon points="72.5,74.5 75.7,75.4 68.6,101.3 65.8,99.9" fill="#1ed8a1"/><polygon points="76.0,75.6 79.2,76.5 71.8,102.9 69.0,101.5" fill="#1ed0c4"/><polygon points="79.6,76.6 82.7,77.5 75.0,104.4 72.2,103.0" fill="#20bedc"/><polygon points="81.8,78.1 83.8,78.7 79.8,94.1 77.8,93.5" fill="#3f73d5"/><polygon points="85.0,79.5 91.6,81.7 90.4,86.1 84.0,83.9" fill="#4664cd"/><polygon points="82.2,84.9 90.2,87.5 87.8,96.1 80.0,93.5" fill="#2896e6"/><polygon points="77.2,94.7 83.6,96.9 81.8,103.5 75.4,101.3" fill="#3484de"/><polygon points="70.6,101.8 76.6,103.7 76.0,106.1 70.0,104.1" fill="#1eccd8"/><polygon points="106.2,65.7 119.8,71.2 121.5,75.1 108.3,107.9 89.2,100.8 97.4,78.3 103.4,78.7" fill="#4450be"/><polygon points="105.8,66.1 107.0,66.5 103.2,75.5 102.0,75.1" fill="#3484de"/><path d="M97.4 78.3 L91.7 99.6 L107.7 105.6" stroke="#2a3a90" stroke-width="0.4" fill="none"/><polygon points="70.9,102.3 73.9,102.8 73.4,105.1 70.4,104.6" fill="#1eccd8"/><polygon points="74.4,102.9 77.3,103.4 76.8,105.6 73.8,105.1" fill="#1eccd8"/><polygon points="65.4,115.3 81.3,119.5 78.6,130.8 62.5,128.4" fill="#1ecdd3"/><polygon points="84.1,120.7 87.0,121.8 85.9,124.8 82.9,123.8" fill="#3484de"/><polygon points="87.5,121.9 90.5,123.0 89.3,125.9 86.4,124.9" fill="#3484de"/><polygon points="90.9,123.1 93.9,124.1 92.8,127.0 89.8,126.0" fill="#3484de"/><polygon points="65.4,131.6 77.5,133.5 76.6,136.8 64.9,134.9" fill="#1ececd"/><polygon points="64.4,136.3 75.7,138.2 74.7,141.4 71.9,141.0 74.3,143.3 71.0,146.1 68.2,142.8 63.5,141.0" fill="#26db8a"/><polygon points="81.0,126.7 84.6,127.5 81.4,141.2 78.2,140.4" fill="#1ecdd3"/><polygon points="85.0,127.5 88.7,128.4 85.9,138.3 82.5,137.4" fill="#1ecdd3"/><polygon points="89.2,128.6 92.6,129.7 90.4,136.1 87.2,135.2" fill="#1ecdd3"/><polygon points="93.1,129.7 96.6,131.2 94.7,133.8 91.9,132.7" fill="#1ecdd3"/><polygon points="105.7,130.7 110.4,133.9 106.1,142.4 97.2,136.3 100.5,134.4" fill="#1ecdd3"/><polygon points="108.0,137.2 110.4,138.2 108.5,141.9 106.6,141.4" fill="#1ecdd3"/><polygon points="153.8,114.2 164.1,117.4 158.0,132.0 154.3,137.6 143.5,133.8 146.3,130.1 150.5,118.8" fill="#23da92"/><polygon points="166.4,109.5 171.1,110.6 171.1,133.1 159.4,130.1 164.1,117.4" fill="#23da92"/><polygon points="158.9,131.0 171.1,134.0 171.1,140.6 154.3,140.6" fill="#23da92"/><path d="M161.3 132.0 L158.0 140.6" stroke="#001018" stroke-width="0.65" fill="none"/><path d="M165.5 132.9 L162.7 140.6" stroke="#001018" stroke-width="0.65" fill="none"/><path d="M169.3 133.8 L167.4 140.6" stroke="#001018" stroke-width="0.65" fill="none"/><polygon points="147.2,135.7 153.3,137.6 152.4,140.4 146.3,138.5" fill="#a0d81c"/><polygon points="201.8,76.9 219.2,82.8 218.0,85.9 200.9,79.9" fill="#eda625"/><polygon points="200.7,80.4 217.8,86.4 216.6,89.5 199.8,83.5" fill="#e8c820"/><polygon points="199.6,84.0 216.4,90.0 215.2,93.0 198.7,87.0" fill="#d9ca1f"/><polygon points="189.3,77.5 192.8,78.7 191.6,81.8 188.0,80.5" fill="#d4cb1e"/><polygon points="187.8,81.0 191.4,82.3 190.1,85.4 186.5,84.1" fill="#a7d61c"/><polygon points="186.3,84.6 189.9,85.9 188.6,88.9 185.0,87.7" fill="#6adc39"/><polygon points="184.8,88.2 188.4,89.4 187.2,92.5 183.6,91.3" fill="#2adc80"/><polygon points="194.3,80.2 196.8,81.2 195.8,84.1 193.3,83.2" fill="#d4cb1e"/><polygon points="193.2,83.6 195.7,84.6 194.7,87.5 192.2,86.6" fill="#a7d61c"/><polygon points="192.1,87.1 194.5,88.0 193.6,90.9 191.1,90.0" fill="#6adc39"/><polygon points="191.0,90.5 193.4,91.4 192.4,94.3 190.0,93.4" fill="#2adc80"/><polygon points="197.2,81.3 199.8,82.2 198.7,85.2 196.2,84.2" fill="#d4cb1e"/><polygon points="196.1,84.7 198.6,85.6 197.6,88.6 195.1,87.6" fill="#a7d61c"/><polygon points="194.9,88.1 197.4,89.0 196.4,92.0 194.0,91.1" fill="#6adc39"/><polygon points="193.8,91.5 196.2,92.4 195.2,95.4 192.8,94.5" fill="#2adc80"/><polygon points="200.0,88.2 202.9,89.1 199.6,97.5 195.8,96.1" fill="#91d924"/><polygon points="180.6,93.7 183.2,94.6 181.8,98.3 179.2,97.2" fill="#23da92"/><polygon points="183.6,94.8 186.2,95.7 184.8,99.5 182.2,98.4" fill="#23da92"/><polygon points="186.6,95.9 189.2,96.8 187.8,100.8 185.2,99.7" fill="#23da92"/><polygon points="189.6,97.0 192.2,97.9 190.8,102.1 188.2,101.0" fill="#23da92"/><polygon points="192.6,98.1 195.2,99.0 193.8,103.3 191.2,102.2" fill="#23da92"/><polygon points="195.6,99.2 198.2,100.1 196.8,104.6 194.2,103.5" fill="#23da92"/><polygon points="198.6,100.3 201.2,101.2 199.8,105.9 197.2,104.8" fill="#23da92"/><polygon points="187.4,106.9 202.4,111.6 201.4,114.6 185.5,114.6" fill="#23da92"/><polygon points="162.0,44.0 172.7,53.4 162.0,63.3 152.2,54.4" fill="#1ed2bd"/><polygon points="173.0,54.5 174.9,56.1 164.9,66.0 162.5,64.1" fill="#25db8b"/><polygon points="175.1,56.4 177.0,58.0 167.5,68.3 165.2,66.3" fill="#33dc76"/><polygon points="177.3,58.2 179.2,59.8 170.2,70.5 167.9,68.6" fill="#4edc56"/><polygon points="179.4,60.0 181.3,61.6 172.9,72.8 170.5,70.8" fill="#68dc3a"/><polygon points="181.6,61.8 183.5,63.4 175.5,75.0 173.2,73.1" fill="#84da2b"/><polygon points="176.9,74.8 183.2,75.6 180.7,80.6 175.7,76.8" fill="#cdcc1e"/><polygon points="145.4,86.1 149.2,80.5 162.0,88.3 159.6,96.1 185.2,104.6 186.6,111.1 172.5,108.4 166.4,107.2 163.8,115.5 154.5,112.1 152.4,112.1 145.2,130.6 140.2,138.6 127.0,125.6 127.2,123.6" fill="#1ecfca"/><path d="M142.3 93.1 L156.9 98.0" stroke="#001018" stroke-width="0.65" fill="none"/><path d="M140.2 97.3 L155.5 102.1" stroke="#001018" stroke-width="0.65" fill="none"/><path d="M138.1 101.5 L154.8 107.7" stroke="#001018" stroke-width="0.65" fill="none"/><path d="M136.0 106.3 L152.7 111.9" stroke="#001018" stroke-width="0.65" fill="none"/><path d="M133.2 111.9 L151.3 117.4" stroke="#001018" stroke-width="0.65" fill="none"/><path d="M131.2 116.7 L148.5 122.3" stroke="#001018" stroke-width="0.65" fill="none"/><path d="M129.1 120.9 L146.4 127.1" stroke="#001018" stroke-width="0.65" fill="none"/><path d="M160.2 95.6 L152.5 112.1" stroke="#001018" stroke-width="0.65" fill="none"/><path d="M158.0 103.5 L166.4 107.2" stroke="#001018" stroke-width="0.65" fill="none"/><path d="M150.5 84.7 L156.2 88.1 L154.2 91.7" stroke="#001018" stroke-width="0.65" fill="none"/><polygon points="154.9,114.1 163.3,115.9 166.1,108.9 183.9,114.3 187.2,107.0 202.2,111.7 197.1,124.4 190.5,122.5 179.3,146.6 167.5,146.1 154.2,141.4 155.8,136.1 150.2,134.2 150.2,118.3" fill="#23da92"/><path d="M162.9 116.4 L155.8 136.1" stroke="#001018" stroke-width="0.65" fill="none"/><path d="M155.8 136.1 L159.6 129.1 L171.3 133.8 L178.8 114.5" stroke="#001018" stroke-width="0.65" fill="none"/><path d="M178.8 115.0 L167.5 146.6" stroke="#001018" stroke-width="0.65" fill="none"/><path d="M183.0 116.2 L172.2 146.6" stroke="#001018" stroke-width="0.65" fill="none"/><path d="M185.8 111.5 L200.8 116.2" stroke="#001018" stroke-width="0.65" fill="none"/><path d="M184.7 115.5 L199.4 120.2" stroke="#001018" stroke-width="0.65" fill="none"/><path d="M163.3 130.7 L159.6 143.3" stroke="#001018" stroke-width="0.65" fill="none"/><path d="M167.5 132.3 L163.8 144.8" stroke="#001018" stroke-width="0.65" fill="none"/><path d="M183.9 114.3 L183.0 116.2" stroke="#001018" stroke-width="0.65" fill="none"/><path d="M190.5 119.2 L191.4 119.7" stroke="#001018" stroke-width="0.65" fill="none"/><polygon points="190.6,123.3 195.8,125.1 193.9,129.8 188.6,128.2" fill="#a2d71c"/><polygon points="188.3,129.0 193.6,130.5 191.7,135.2 186.3,133.8" fill="#a6d61c"/><polygon points="186.0,134.6 191.4,136.0 189.6,140.7 184.0,139.5" fill="#abd51c"/><polygon points="183.7,140.3 189.3,141.4 187.4,146.1 181.8,145.2" fill="#afd41d"/><polygon points="200.8,127.2 208.8,130.9 206.0,137.5 199.4,134.2" fill="#a0d81c"/><polygon points="198.5,135.3 203.0,136.9 202.0,139.8 197.4,138.3" fill="#d7cb1f"/><polygon points="197.2,138.8 201.8,140.2 200.8,143.0 196.0,141.8" fill="#daca1f"/><polygon points="195.9,142.3 200.6,143.5 199.6,146.3 194.7,145.3" fill="#dec91f"/><polygon points="150.2,137.0 153.5,138.4 152.1,141.3 150.2,140.8" fill="#a0d81c"/><polygon points="153.5,142.8 156.9,144.1 156.0,146.6 152.5,145.5" fill="#abd51c"/><polygon points="157.7,144.7 161.3,145.8 160.3,148.3 156.8,147.2" fill="#a0d81c"/><polygon points="161.9,146.6 165.9,147.9 165.0,150.2 161.0,148.9" fill="#23da92"/><polygon points="133.2,133.2 143.0,133.2 140.2,138.8" fill="#1ececd"/><polygon points="146.8,136.0 153.3,138.3 152.4,140.7 146.3,138.3" fill="#a0d81c"/><polygon points="153.8,142.5 157.1,143.9 155.7,146.3 152.9,144.9" fill="#abd51c"/><polygon points="157.5,144.4 161.3,145.8 160.4,148.0 156.6,146.8" fill="#abd51c"/><polygon points="114.7,141.7 117.6,143.0 113.6,150.0 110.9,148.3" fill="#21d999"/><polygon points="118.1,143.2 121.0,144.5 116.8,152.0 114.1,150.3" fill="#22d997"/><polygon points="121.5,144.7 124.4,146.0 120.1,154.0 117.4,152.3" fill="#22da94"/><polygon points="124.9,146.2 127.8,147.5 123.3,156.0 120.6,154.3" fill="#23da92"/><polygon points="128.4,147.7 131.2,149.0 126.5,158.0 123.8,156.4" fill="#24da90"/><polygon points="131.8,149.2 134.6,150.5 129.7,160.1 127.0,158.4" fill="#24db8d"/><polygon points="135.2,150.7 138.1,152.0 132.9,162.1 130.2,160.4" fill="#25db8b"/><polygon points="116.2,139.7 118.7,141.0 117.8,143.0 115.3,141.8" fill="#1ed6ac"/><polygon points="119.5,141.3 122.0,142.6 121.1,144.6 118.6,143.4" fill="#1ed6ab"/><polygon points="122.8,142.9 125.3,144.2 124.3,146.2 121.8,145.0" fill="#1ed6a9"/><polygon points="126.1,144.5 128.6,145.8 127.6,147.7 125.1,146.5" fill="#1ed7a8"/><polygon points="129.3,146.2 131.8,147.4 130.9,149.3 128.4,148.1" fill="#1ed7a7"/><polygon points="132.6,147.8 135.1,149.0 134.2,150.9 131.7,149.7" fill="#1ed7a5"/><polygon points="135.9,149.4 138.4,150.6 137.5,152.5 135.0,151.3" fill="#1ed8a4"/><polygon points="139.2,151.0 141.7,152.2 140.7,154.1 138.2,152.9" fill="#1ed8a3"/><polygon points="135.7,154.0 140.9,156.2 136.6,163.3 131.8,160.9" fill="#91d924"/><polygon points="167.6,138.5 183.1,138.5 177.9,152.1 167.4,150.7" fill="#23da92"/><path d="M171.1 142.2 L168.8 150.8" stroke="#001018" stroke-width="0.65" fill="none"/><path d="M175.8 142.2 L173.2 151.6" stroke="#001018" stroke-width="0.65" fill="none"/><polygon points="180.7,141.3 184.1,142.2 181.4,149.9 178.2,148.8" fill="#91d924"/><polygon points="185.0,142.7 188.0,143.6 185.4,150.8 182.6,149.9" fill="#a0d81c"/><polygon points="152.9,158.2 155.7,159.1 155.0,161.2 152.2,160.2" fill="#82da2c"/><polygon points="156.6,159.6 159.9,160.6 159.2,162.7 155.9,161.6" fill="#82da2c"/><polygon points="160.4,161.4 164.1,162.7 163.4,164.9 159.7,163.7" fill="#1ed8a2"/><polygon points="151.0,162.4 154.3,163.3 152.4,169.9 149.1,168.5" fill="#cdcc1e"/><polygon points="154.7,163.8 158.0,164.7 156.1,171.3 153.3,170.3" fill="#cdcc1e"/><polygon points="158.9,165.7 162.7,166.6 160.4,173.2 157.1,172.2" fill="#91d924"/><polygon points="163.6,167.1 166.0,168.0 164.1,174.1 161.8,173.2" fill="#91d924"/><polygon points="167.4,167.1 172.1,168.5 167.4,180.7 162.7,178.8" fill="#cdcc1e"/><polygon points="168.8,163.8 173.5,165.2 172.8,167.1 168.1,165.7" fill="#82da2c"/><polygon points="174.4,165.2 177.2,166.1 176.6,168.3 173.8,167.3" fill="#d5cb1f"/><polygon points="178.2,165.8 181.4,166.9 180.7,169.0 177.5,168.0" fill="#e9bf21"/><polygon points="181.6,167.3 185.4,168.5 184.6,170.7 180.9,169.5" fill="#f08c28"/><polygon points="173.0,168.9 175.8,169.9 174.4,174.1 171.6,173.2" fill="#d5cb1f"/><polygon points="176.3,170.8 179.1,171.8 177.7,175.0 175.4,174.1" fill="#ee9d26"/><polygon points="179.6,170.8 184.7,173.2 185.7,175.0 183.8,178.3 178.6,176.0" fill="#e83030"/><polygon points="199.2,174.3 204.1,174.6 203.3,177.4 198.2,176.9" fill="#e83030"/><polygon points="198.1,177.3 203.2,177.8 202.5,180.6 197.2,179.9" fill="#e83030"/><polygon points="197.0,180.3 202.4,181.0 201.7,183.8 196.1,182.9" fill="#e83030"/><polygon points="198.0,135.2 202.7,136.9 201.7,139.8 196.9,138.1" fill="#cecc1e"/><polygon points="196.8,138.6 201.6,140.2 200.5,143.1 195.7,141.4" fill="#d1cb1e"/><polygon points="195.5,141.9 200.4,143.6 199.3,146.5 194.5,144.8" fill="#d3cb1e"/><polygon points="192.3,146.3 196.8,147.5 195.2,152.1 190.7,151.1" fill="#dcca1f"/><polygon points="197.6,147.7 202.1,148.8 200.5,153.2 196.0,152.3" fill="#dcca1f"/></g><defs><filter id="cvb" x="-5%" y="-5%" width="110%" height="110%"><feGaussianBlur stdDeviation="0.45"/></filter></defs></svg></div>
<svg style="left:341.0px;top:204.7px" width="10" height="10" viewBox="0 0 10 10"><rect x="0" y="0" width="10" height="10" rx="1" fill="#f6f8fa" opacity=".92"/><path d="M2.300 2.400h5.400M2.300 2.400v5.200M2.500 7.400l5-5" stroke="#7a8894" stroke-width="0.8" fill="none"/><circle cx="2.400" cy="2.400" r="1.500" fill="#8a9298" stroke="#5a646c" stroke-width="0.5"/><circle cx="7.800" cy="2.300" r="1.300" fill="#58c0d8" stroke="#4a8a9a" stroke-width="0.5"/><circle cx="2.400" cy="7.600" r="1.500" fill="#8a9298" stroke="#5a646c" stroke-width="0.5"/></svg>
<div class="a" style="left:604.3px;top:201.0px;width:22.3px;height:12.3px;background:linear-gradient(180deg,#e9a988 0,#d9845a 45%,#c8562c 55%,#d98a55 100%);border-radius:2.5px;box-shadow:0 0 0 0.9px #8a4a38 inset,0 0 0 1.7px rgba(255,255,255,.5) inset"></div>
<svg style="left:610.45px;top:202.15px" width="10" height="10"><path d="M2 1.8l6 6.2M8 1.8l-6 6.2" stroke="#6a3a30" stroke-width="2.6" stroke-linecap="round"/><path d="M2 1.8l6 6.2M8 1.8l-6 6.2" stroke="#fff" stroke-width="1.5" stroke-linecap="round"/></svg>
<div class="a" style="left:579.6px;top:201.0px;width:22.3px;height:12.3px;background:linear-gradient(180deg,rgba(255,255,255,.55) 0,rgba(255,255,255,.25) 45%,rgba(200,215,232,.35) 55%,rgba(255,255,255,.3) 100%);border-radius:2.5px;box-shadow:0 0 0 0.9px #8c9bab inset,0 0 0 1.7px rgba(255,255,255,.5) inset"></div>
<svg style="left:585.75px;top:202.15px" width="10" height="10"><rect x="1.4" y="1.6" width="7.2" height="6.2" rx="0.8" fill="#f4f6f8" stroke="#5d6873" stroke-width="0.8"/><rect x="3.4" y="3.6" width="3.2" height="2.2" fill="#a9b9c9" stroke="#5d6873" stroke-width="0.6"/></svg>
<div class="a" style="left:554.9px;top:201.0px;width:22.3px;height:12.3px;background:linear-gradient(180deg,rgba(255,255,255,.55) 0,rgba(255,255,255,.25) 45%,rgba(200,215,232,.35) 55%,rgba(255,255,255,.3) 100%);border-radius:2.5px;box-shadow:0 0 0 0.9px #8c9bab inset,0 0 0 1.7px rgba(255,255,255,.5) inset"></div>
<svg style="left:561.0500000000001px;top:202.15px" width="10" height="10"><rect x="1.2" y="4.6" width="7.6" height="2.6" rx="0.8" fill="#f4f6f8" stroke="#5d6873" stroke-width="0.8"/></svg>
<div class="t" style="left:22px;top:6px;font-size:10.1px;line-height:10.1px;color:#02262b;font-family:'Liberation Sans',sans-serif;font-weight:normal;letter-spacing:0.000px;transform:translate(0.00px,0.23px) rotate(0.01deg) scaleX(0.9297);transform-origin:0 50%;">depthmapX 0.50 - Tasos Varoudis</div>
<div class="t" style="left:6px;top:26px;font-size:9.5px;line-height:9.5px;color:#0a0a0a;font-family:'Liberation Sans',sans-serif;font-weight:normal;letter-spacing:0.000px;transform:translate(0.50px,0.05px) rotate(0.01deg) scaleX(0.8677);transform-origin:0 50%;"><u>F</u>ile</div>
<div class="t" style="left:32px;top:26px;font-size:9.5px;line-height:9.5px;color:#0a0a0a;font-family:'Liberation Sans',sans-serif;font-weight:normal;letter-spacing:0.000px;transform:translate(0.00px,0.05px) rotate(0.01deg) scaleX(0.9579);transform-origin:0 50%;"><u>E</u>dit</div>
<div class="t" style="left:59px;top:26px;font-size:9.5px;line-height:9.5px;color:#0a0a0a;font-family:'Liberation Sans',sans-serif;font-weight:normal;letter-spacing:0.750px;transform:translate(0.00px,0.05px) rotate(0.01deg) scaleX(1.0000);transform-origin:0 50%;"><u>M</u>ap</div>
<div class="t" style="left:90px;top:26px;font-size:9.5px;line-height:9.5px;color:#0a0a0a;font-family:'Liberation Sans',sans-serif;font-weight:normal;letter-spacing:0.095px;transform:translate(0.00px,0.05px) rotate(0.01deg) scaleX(1.0000);transform-origin:0 50%;"><u>A</u>ttributes</div>
<div class="t" style="left:142px;top:26px;font-size:9.5px;line-height:9.5px;color:#0a0a0a;font-family:'Liberation Sans',sans-serif;font-weight:normal;letter-spacing:0.078px;transform:translate(0.50px,0.05px) rotate(0.01deg) scaleX(1.0000);transform-origin:0 50%;"><u>T</u>ools</div>
<div class="t" style="left:176px;top:26px;font-size:9.5px;line-height:9.5px;color:#0a0a0a;font-family:'Liberation Sans',sans-serif;font-weight:normal;letter-spacing:0.000px;transform:translate(0.50px,0.05px) rotate(0.01deg) scaleX(0.9786);transform-origin:0 50%;"><u>V</u>iew</div>
<div class="t" style="left:207px;top:26px;font-size:9.5px;line-height:9.5px;color:#0a0a0a;font-family:'Liberation Sans',sans-serif;font-weight:normal;letter-spacing:0.241px;transform:translate(0.50px,0.05px) rotate(0.01deg) scaleX(1.0000);transform-origin:0 50%;"><u>W</u>indow</div>
<div class="t" style="left:254px;top:26px;font-size:9.5px;line-height:9.5px;color:#0a0a0a;font-family:'Liberation Sans',sans-serif;font-weight:normal;letter-spacing:0.000px;transform:translate(0.00px,0.05px) rotate(0.01deg) scaleX(0.9457);transform-origin:0 50%;"><u>H</u>elp</div>
<div class="t" style="left:435px;top:418px;font-size:9.4px;line-height:9.4px;color:#1a1a1a;font-family:'Liberation Sans',sans-serif;font-weight:normal;letter-spacing:0.000px;transform:translate(0.00px,0.22px) rotate(0.01deg) scaleX(0.8623);transform-origin:0 50%;">101</div>
<div class="t" style="left:462px;top:418px;font-size:9.4px;line-height:9.4px;color:#1a1a1a;font-family:'Liberation Sans',sans-serif;font-weight:normal;letter-spacing:0.000px;transform:translate(0.00px,0.22px) rotate(0.01deg) scaleX(0.9758);transform-origin:0 50%;">1250.72,&nbsp; 1211.7</div>
<div class="t" style="left:544px;top:418px;font-size:9.4px;line-height:9.4px;color:#1a1a1a;font-family:'Liberation Sans',sans-serif;font-weight:normal;letter-spacing:0.000px;transform:translate(0.00px,0.22px) rotate(0.01deg) scaleX(0.9525);transform-origin:0 50%;">35481.6,&nbsp; 28227.3</div>
<div class="t" style="left:4px;top:62px;font-size:9px;line-height:9px;color:#111;font-family:'Liberation Serif',serif;font-weight:bold;letter-spacing:0.000px;transform:translate(0.50px,0.00px) rotate(0.01deg) scaleX(0.9539);transform-origin:0 50%;">Index</div>
<div class="t" style="left:4px;top:169px;font-size:9px;line-height:9px;color:#111;font-family:'Liberation Serif',serif;font-weight:bold;letter-spacing:0.400px;transform:translate(0.30px,0.30px) rotate(0.01deg) scaleX(1.0000);transform-origin:0 50%;">AttributesList</div>
<div class="t" style="left:33px;top:76px;font-size:9.4px;line-height:9.4px;color:#141414;font-family:'Liberation Sans',sans-serif;font-weight:normal;letter-spacing:0.000px;transform:translate(0.75px,0.62px) rotate(0.01deg) scaleX(0.9765);transform-origin:0 50%;">Shape Graphs</div>
<div class="t" style="left:46px;top:90px;font-size:9.4px;line-height:9.4px;color:#141414;font-family:'Liberation Sans',sans-serif;font-weight:normal;letter-spacing:0.000px;transform:translate(0.25px,0.42px) rotate(0.01deg) scaleX(0.9973);transform-origin:0 50%;">Convex Map</div>
<div class="t" style="left:61px;top:104px;font-size:9.4px;line-height:9.4px;color:#141414;font-family:'Liberation Sans',sans-serif;font-weight:normal;letter-spacing:0.000px;transform:translate(0.00px,0.12px) rotate(0.01deg) scaleX(1.0000);transform-origin:0 50%;">Editable On</div>
<div class="t" style="left:33px;top:117px;font-size:9.4px;line-height:9.4px;color:#141414;font-family:'Liberation Sans',sans-serif;font-weight:normal;letter-spacing:0.000px;transform:translate(0.75px,0.92px) rotate(0.01deg) scaleX(0.9833);transform-origin:0 50%;">Drawing Layers</div>
<div class="t" style="left:48px;top:131px;font-size:9.4px;line-height:9.4px;color:#141414;font-family:'Liberation Sans',sans-serif;font-weight:normal;letter-spacing:0.061px;transform:translate(0.40px,0.62px) rotate(0.01deg) scaleX(1.0000);transform-origin:0 50%;">C:/Users/C/Desktop/Dept...</div>
<div class="t" style="left:61px;top:145px;font-size:9.4px;line-height:9.4px;color:#141414;font-family:'Liberation Sans',sans-serif;font-weight:normal;letter-spacing:0.000px;transform:translate(0.00px,0.42px) rotate(0.01deg) scaleX(0.9791);transform-origin:0 50%;">subsetOfSkin</div>
<div class="t" style="left:21px;top:184px;font-size:9.4px;line-height:9.4px;color:#141414;font-family:'Liberation Sans',sans-serif;font-weight:normal;letter-spacing:0.073px;transform:translate(0.00px,0.82px) rotate(0.01deg) scaleX(1.0000);transform-origin:0 50%;">Ref Number</div>
<div class="t" style="left:21px;top:198px;font-size:9.4px;line-height:9.4px;color:#141414;font-family:'Liberation Sans',sans-serif;font-weight:normal;letter-spacing:0.000px;transform:translate(0.00px,0.57px) rotate(0.01deg) scaleX(0.9593);transform-origin:0 50%;">Choice</div>
<div class="t" style="left:21px;top:212px;font-size:9.4px;line-height:9.4px;color:#141414;font-family:'Liberation Sans',sans-serif;font-weight:normal;letter-spacing:0.000px;transform:translate(0.00px,0.32px) rotate(0.01deg) scaleX(0.9968);transform-origin:0 50%;">Choice [Connectivity Wgt]</div>
<div class="t" style="left:21px;top:226px;font-size:9.4px;line-height:9.4px;color:#141414;font-family:'Liberation Sans',sans-serif;font-weight:normal;letter-spacing:0.051px;transform:translate(0.00px,0.07px) rotate(0.01deg) scaleX(1.0000);transform-origin:0 50%;">Choice [Connectivity Wgt][Norm]</div>
<div class="t" style="left:21px;top:239px;font-size:9.4px;line-height:9.4px;color:#141414;font-family:'Liberation Sans',sans-serif;font-weight:normal;letter-spacing:0.132px;transform:translate(0.00px,0.82px) rotate(0.01deg) scaleX(1.0000);transform-origin:0 50%;">Choice [Norm]</div>
<div class="t" style="left:21px;top:253px;font-size:9.4px;line-height:9.4px;color:#141414;font-family:'Liberation Sans',sans-serif;font-weight:normal;letter-spacing:0.000px;transform:translate(0.00px,0.57px) rotate(0.01deg) scaleX(0.9789);transform-origin:0 50%;">Connectivity</div>
<div class="t" style="left:21px;top:267px;font-size:9.4px;line-height:9.4px;color:#141414;font-family:'Liberation Sans',sans-serif;font-weight:normal;letter-spacing:0.155px;transform:translate(0.00px,0.32px) rotate(0.01deg) scaleX(1.0000);transform-origin:0 50%;">Integration [HH]</div>
<div class="t" style="left:21px;top:281px;font-size:9.4px;line-height:9.4px;color:#141414;font-family:'Liberation Sans',sans-serif;font-weight:normal;letter-spacing:0.102px;transform:translate(0.00px,0.07px) rotate(0.01deg) scaleX(1.0000);transform-origin:0 50%;">Mean Depth</div>
<div class="t" style="left:21px;top:294px;font-size:9.4px;line-height:9.4px;color:#141414;font-family:'Liberation Sans',sans-serif;font-weight:normal;letter-spacing:0.045px;transform:translate(0.00px,0.82px) rotate(0.01deg) scaleX(1.0000);transform-origin:0 50%;">Mean Depth [Connectivity Wgt]</div>
<div class="t" style="left:21px;top:308px;font-size:9.4px;line-height:9.4px;color:#141414;font-family:'Liberation Sans',sans-serif;font-weight:normal;letter-spacing:0.106px;transform:translate(0.00px,0.57px) rotate(0.01deg) scaleX(1.0000);transform-origin:0 50%;">Node Count</div>
<div class="t" style="left:21px;top:322px;font-size:9.4px;line-height:9.4px;color:#141414;font-family:'Liberation Sans',sans-serif;font-weight:normal;letter-spacing:0.000px;transform:translate(0.00px,0.32px) rotate(0.01deg) scaleX(0.8441);transform-origin:0 50%;">RA</div>
<div class="t" style="left:21px;top:336px;font-size:9.4px;line-height:9.4px;color:#141414;font-family:'Liberation Sans',sans-serif;font-weight:normal;letter-spacing:0.009px;transform:translate(0.00px,0.07px) rotate(0.01deg) scaleX(1.0000);transform-origin:0 50%;">Step Depth</div>
<div class="t" style="left:21px;top:349px;font-size:9.4px;line-height:9.4px;color:#141414;font-family:'Liberation Sans',sans-serif;font-weight:normal;letter-spacing:0.001px;transform:translate(0.00px,0.82px) rotate(0.01deg) scaleX(1.0000);transform-origin:0 50%;">Total Connectivity</div>
<div class="t" style="left:21px;top:363px;font-size:9.4px;line-height:9.4px;color:#141414;font-family:'Liberation Sans',sans-serif;font-weight:normal;letter-spacing:0.156px;transform:translate(0.00px,0.57px) rotate(0.01deg) scaleX(1.0000);transform-origin:0 50%;">Total Depth</div>
<div class="t" style="left:94px;top:402px;font-size:9px;line-height:9px;color:#111;font-family:'Liberation Serif',serif;font-weight:bold;letter-spacing:0.000px;transform:translate(0.00px,0.70px) rotate(0.01deg) scaleX(0.8053);transform-origin:0 50%;">Add</div>
<div class="t" style="left:135px;top:402px;font-size:9px;line-height:9px;color:#111;font-family:'Liberation Serif',serif;font-weight:bold;letter-spacing:0.000px;transform:translate(0.00px,0.70px) rotate(0.01deg) scaleX(0.8387);transform-origin:0 50%;">Remove</div>
<div class="t" style="left:205px;top:78px;font-size:9.5px;line-height:9.5px;color:#161b22;font-family:'Liberation Sans',sans-serif;font-weight:normal;letter-spacing:0.039px;transform:translate(0.30px,0.65px) rotate(0.01deg) scaleX(1.0000);transform-origin:0 50%;text-shadow:0 0 3px rgba(255,255,255,.9),0 0 6px rgba(255,255,255,.7);">CompareToAxialMap&amp;RouteNetwork2:Map View</div>
<div class="t" style="left:355px;top:204px;font-size:9.5px;line-height:9.5px;color:#0c141c;font-family:'Liberation Sans',sans-serif;font-weight:normal;letter-spacing:0.000px;transform:translate(0.00px,0.45px) rotate(0.01deg) scaleX(0.9885);transform-origin:0 50%;text-shadow:0 0 3px rgba(255,255,255,.9),0 0 6px rgba(255,255,255,.7);">TestConvexMap:Map View</div>
</body></html>
